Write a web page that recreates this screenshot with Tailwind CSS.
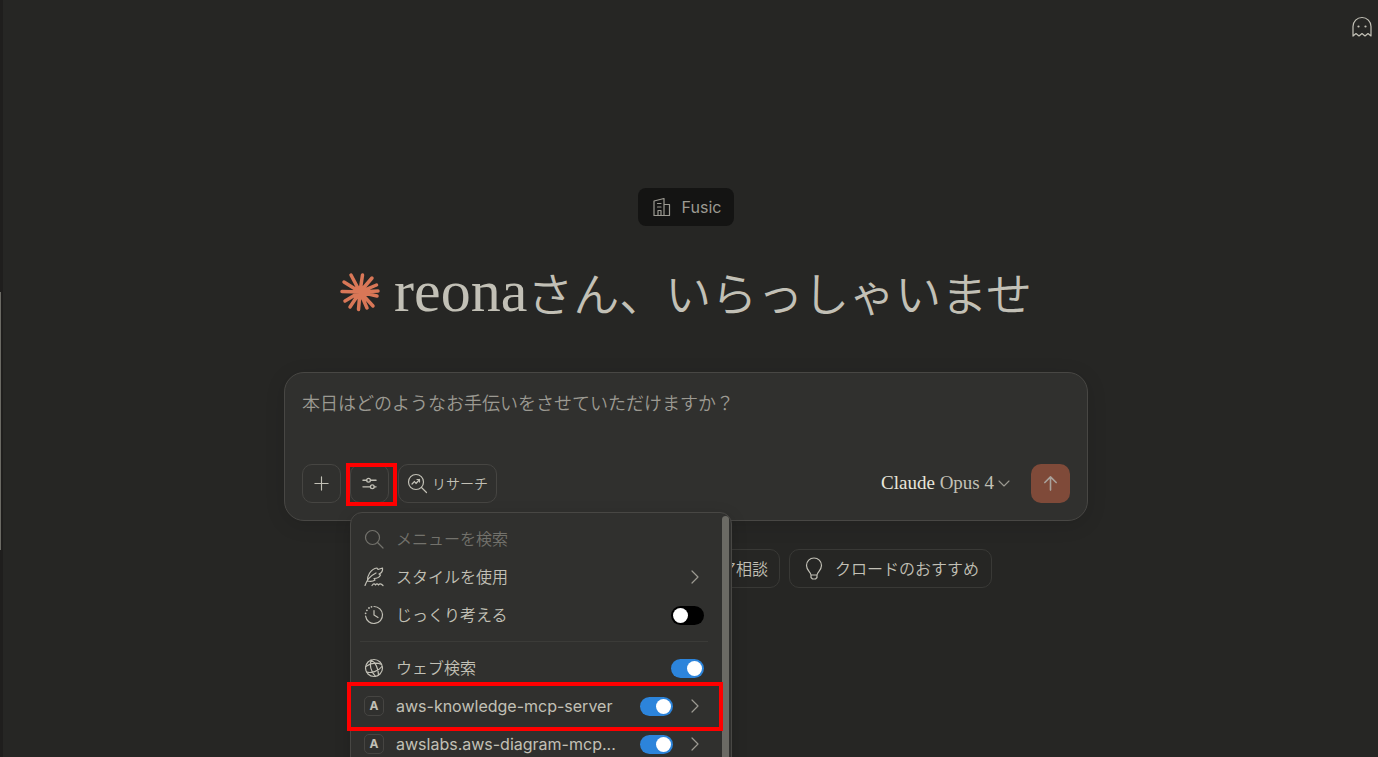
<!DOCTYPE html>
<html lang="ja">
  <head>
    <meta charset="UTF-8" />
    <meta name="viewport" content="width=device-width, initial-scale=1.0" />
    <title>Claude</title>
    <script src="https://cdn.jsdelivr.net/npm/@tailwindcss/browser@4"></script>
  </head>

  <body class="relative flex h-screen overflow-hidden bg-[#262624] text-[#c2c0b6] font-['Inter','Noto_Sans_CJK_JP',sans-serif]">
    <!-- Sidebar edge -->
    <aside class="relative w-[3px] shrink-0 bg-[#1f1e1d]">
      <div class="absolute left-0 top-[292px] h-[258px] w-px bg-[#6b6a64]"></div>
    </aside>

    <button type="button" aria-label="シークレットチャット" class="absolute right-[5px] top-4">
      <svg class="size-[22px]" viewBox="0 0 22 22" fill="none" stroke="currentColor" stroke-width="1.200" stroke-linejoin="round">
        <path d="M2 20V10.500a9 9 0 0 1 18 0V20l-3-2.500-3 2.500-3-2.500-3 2.500-3-2.500z" />
        <circle cx="7.500" cy="10.500" r="1.100" fill="currentColor" stroke="none" />
        <circle cx="14.500" cy="10.500" r="1.100" fill="currentColor" stroke="none" />
      </svg>
    </button>

    <main class="flex min-w-0 flex-1 flex-col items-center pr-[9px] pt-[188px]">
      <div class="flex h-[38px] items-center gap-[9px] rounded-lg bg-[#141413] px-[13px] text-[#9c9a92]">
        <svg class="size-[22px]" viewBox="0 0 22 22" fill="none" stroke="currentColor" stroke-width="1.200" stroke-linejoin="round" stroke-linecap="round">
          <path d="M3 19.500V5l10-2.500v17zM13 8.500h5.500v11H13M7 19.500v-5h3v5M6.500 7.500h3.500M6.500 11h3.500" />
        </svg>
        <span class="text-base">Fusic</span>
      </div>

      <h1 class="mb-[50px] mt-[36px] flex h-[60px] items-center gap-[14px] text-[46px] font-[350] leading-[60px]">
        <svg class="size-[40px]" viewBox="0 0 40 40" fill="none" stroke="#d97757" stroke-width="3.500" stroke-linecap="round">
          <path d="M20 20 11 3M20 20 22.500 3M20 20 32 6M20 20 36.500 13M20 20 38 19M20 20 37 24M20 20 33 34M20 20 27 36M20 20 18.500 37.500M20 20 10 35M20 20 5 29M20 20 2 19.500M20 20 4 10" />
        </svg>
        <span class="whitespace-nowrap"><span class="font-['Liberation_Serif',serif] text-[60px]">reona</span>さん、いらっしゃいませ</span>
      </h1>

      <form class="relative z-10 w-full max-w-[804px] rounded-[20px] border border-[#484744] bg-[#30302e] p-[17px] shadow-[0_4px_20px_rgba(0,0,0,0.12)]">
        <textarea rows="1" aria-label="メッセージ" placeholder="本日はどのようなお手伝いをさせていただけますか？" class="block h-[74px] w-full resize-none bg-transparent text-[18px] font-[350] leading-[28px] outline-none placeholder:text-[#9c9a92]"></textarea>

        <div class="flex items-center gap-[9px]">
          <button type="button" aria-label="追加" class="flex size-[39px] items-center justify-center rounded-[10px] border border-[#464542]">
            <svg class="size-[17px]" viewBox="0 0 18 18" fill="none" stroke="currentColor" stroke-width="1.200" stroke-linecap="round"><path d="M9 2v14M2 9h14" /></svg>
          </button>

          <div class="relative">
            <button type="button" aria-label="検索とツール" class="flex size-[39px] items-center justify-center rounded-[10px] border border-[#464542]">
              <svg class="size-[15px]" viewBox="0 0 16 16" fill="none" stroke="currentColor" stroke-width="1.400" stroke-linecap="round">
                <path d="M1 4.500h4M9 4.500h6M1 11.500h8M13 11.500h2" />
                <circle cx="7" cy="4.500" r="2" />
                <circle cx="11" cy="11.500" r="2" />
              </svg>
            </button>
            <div class="pointer-events-none absolute -left-1 -top-px h-[43px] w-[51px] border-4 border-[#ff0000]"></div>

            <!-- Tools menu -->
            <div class="absolute left-0 top-[48px] h-[420px] w-[382px] rounded-xl border border-[#484744] bg-[#30302e] pl-[9px] pr-[23px] pt-[7px] shadow-[0_4px_16px_rgba(0,0,0,0.15)]">
              <div class="absolute right-[2px] top-[3px] h-[400px] w-[7px] rounded-full bg-[#6b6a64]"></div>

              <label class="flex h-[38px] items-center gap-3 px-1 text-[#73726c]">
                <svg class="size-[20px] shrink-0" viewBox="0 0 20 20" fill="none" stroke="currentColor" stroke-width="1.200" stroke-linecap="round"><circle cx="8.500" cy="8.500" r="7" /><path d="m13.500 13.500 5.500 5.500" /></svg>
                <input type="text" aria-label="メニューを検索" placeholder="メニューを検索" class="min-w-0 flex-1 bg-transparent text-base font-[350] outline-none placeholder:text-[#73726c]" />
              </label>

              <button type="button" class="flex h-[38px] w-full items-center gap-3 px-1 text-left">
                <svg class="size-[20px] shrink-0" viewBox="0 0 20 20" fill="none" stroke="currentColor" stroke-width="1.200" stroke-linecap="round" stroke-linejoin="round">
                  <path d="M1 18.500C3 12 7 8.500 12 6M3.500 14C3 9 6.500 2 13 1l1 1.500L18.500 1c.5 3-1 5-3.500 6l1.500 1c-1.500 3-4 3.500-6.500 3.500l1 1.500c-2 1.500-5 1.500-7.500 1M8 18.500c1.500-2 2.500-2 3.500-.5 1-1.500 2-1.500 3 0 1-1.500 2.500-1.500 4.500.5" />
                </svg>
                <span class="flex-1 text-base font-[350]">スタイルを使用</span>
                <svg class="mr-[5px] h-[14px] w-[8px]" viewBox="0 0 8 14" fill="none" stroke="#9c9a92" stroke-width="1.200" stroke-linecap="round" stroke-linejoin="round"><path d="m1 1 6 6-6 6" /></svg>
              </button>

              <label class="flex h-[38px] items-center gap-3 px-1">
                <svg class="size-[20px] shrink-0" viewBox="0 0 20 20" fill="none" stroke="currentColor" stroke-width="1.200" stroke-linecap="round" stroke-linejoin="round">
                  <path d="M10 1.500a8.500 8.500 0 1 1-8.400 9.700M10 5.500V10l4 2.500" />
                  <path d="M1.600 8.300v0M2.900 5.300v0M5 3v0M7.500 1.800v0" stroke-width="1.800" />
                </svg>
                <span class="flex-1 text-base font-[350]">じっくり考える</span>
                <input type="checkbox" class="relative h-[19px] w-[33px] appearance-none rounded-full bg-black before:absolute before:left-[2px] before:top-[2px] before:size-[15px] before:rounded-full before:bg-white checked:bg-[#2c84db] checked:before:left-[16px]" />
              </label>

              <hr class="my-[7px] border-[#3b3b38]" />

              <label class="flex h-[38px] items-center gap-3 px-1">
                <svg class="size-[20px] shrink-0" viewBox="0 0 20 20" fill="none" stroke="currentColor" stroke-width="1.200" stroke-linecap="round" stroke-linejoin="round">
                  <circle cx="10" cy="10" r="8.500" />
                  <path d="M7 2c-1.500 5 0 11.500 4.500 16.300M7 2c4 2 7.500 8 7.500 15M1.700 8.500c5-3.500 11-4 15.500-2.300M2.500 14c5 1.500 11.500-.5 15.500-5.500" />
                </svg>
                <span class="flex-1 text-base font-[350]">ウェブ検索</span>
                <input type="checkbox" checked class="relative h-[19px] w-[33px] appearance-none rounded-full bg-black before:absolute before:left-[2px] before:top-[2px] before:size-[15px] before:rounded-full before:bg-white checked:bg-[#2c84db] checked:before:left-[16px]" />
              </label>

              <div class="relative flex h-[38px] items-center px-1">
                <label class="flex min-w-0 flex-1 items-center gap-3">
                  <span class="flex size-[20px] shrink-0 items-center justify-center rounded-[5px] border border-[#464542] text-xs font-bold">A</span>
                  <span class="w-[232px] truncate text-base">aws-knowledge-mcp-server</span>
                  <input type="checkbox" checked class="relative h-[19px] w-[33px] shrink-0 appearance-none rounded-full bg-black before:absolute before:left-[2px] before:top-[2px] before:size-[15px] before:rounded-full before:bg-white checked:bg-[#2c84db] checked:before:left-[16px]" />
                </label>
                <button type="button" aria-label="aws-knowledge-mcp-server" class="px-[5px]">
                  <svg class="h-[14px] w-[8px]" viewBox="0 0 8 14" fill="none" stroke="#9c9a92" stroke-width="1.200" stroke-linecap="round" stroke-linejoin="round"><path d="m1 1 6 6-6 6" /></svg>
                </button>
                <div class="pointer-events-none absolute -left-[13px] -right-[15px] -top-[5px] h-[49px] border-4 border-[#ff0000]"></div>
              </div>

              <div class="flex h-[38px] items-center px-1">
                <label class="flex min-w-0 flex-1 items-center gap-3">
                  <span class="flex size-[20px] shrink-0 items-center justify-center rounded-[5px] border border-[#464542] text-xs font-bold">A</span>
                  <span class="w-[232px] truncate text-base">awslabs.aws-diagram-mcp...</span>
                  <input type="checkbox" checked class="relative h-[19px] w-[33px] shrink-0 appearance-none rounded-full bg-black before:absolute before:left-[2px] before:top-[2px] before:size-[15px] before:rounded-full before:bg-white checked:bg-[#2c84db] checked:before:left-[16px]" />
                </label>
                <button type="button" aria-label="awslabs.aws-diagram-mcp" class="px-[5px]">
                  <svg class="h-[14px] w-[8px]" viewBox="0 0 8 14" fill="none" stroke="#9c9a92" stroke-width="1.200" stroke-linecap="round" stroke-linejoin="round"><path d="m1 1 6 6-6 6" /></svg>
                </button>
              </div>
            </div>
          </div>

          <button type="button" class="flex h-[39px] items-center gap-1 rounded-[10px] border border-[#464542] px-2">
            <svg class="size-[21px]" viewBox="0 0 21 21" fill="none" stroke="currentColor" stroke-width="1.200" stroke-linecap="round" stroke-linejoin="round"><circle cx="9" cy="9" r="7.500" /><path d="m14.500 14.500 5 5M5 11l2.500-2.500 1.500 2 3.500-4M10 6.500h2.500V9" /></svg>
            <span class="text-sm font-[350]">リサーチ</span>
          </button>

          <button type="button" class="ml-auto flex items-center gap-1 font-['Liberation_Serif',serif] text-[19px]">
            <span><span class="text-[#e8e6dc]">Claude</span> Opus 4</span>
            <svg class="h-[7px] w-[12px]" viewBox="0 0 12 7" fill="none" stroke="#9c9a92" stroke-width="1.100" stroke-linecap="round" stroke-linejoin="round"><path d="m1 1 5 5 5-5" /></svg>
          </button>
          <button type="submit" aria-label="送信" class="ml-3 flex size-[39px] items-center justify-center rounded-[10px] bg-[#7f4a39] text-[#a9a19b]">
            <svg class="size-[17px]" viewBox="0 0 18 18" fill="none" stroke="currentColor" stroke-width="1.700" stroke-linecap="round" stroke-linejoin="round"><path d="M9 16V2M3 8l6-6 6 6" /></svg>
          </button>
        </div>
      </form>

      <div class="mt-7 flex w-full max-w-[804px] justify-end gap-[9px] pr-[96px] text-base font-[350]">
        <button type="button" class="flex h-[39px] items-center rounded-[10px] border border-[#393936] px-[11px]">キャリア相談</button>
        <button type="button" class="flex h-[39px] items-center gap-[9px] rounded-[10px] border border-[#393936] px-3">
          <svg class="h-[24px] w-[24px]" viewBox="0 0 24 24" fill="none" stroke="currentColor" stroke-width="1.200" stroke-linecap="round" stroke-linejoin="round"><path d="M9 18c0-3-4.500-4.500-4.500-9.500a7.500 7.500 0 0 1 15 0c0 5-4.500 6.500-4.500 9.500zM9 18v2.500l1.500 1.500h3l1.500-1.500V18" /></svg>
          クロードのおすすめ
        </button>
      </div>
    </main>
  </body>
</html>
